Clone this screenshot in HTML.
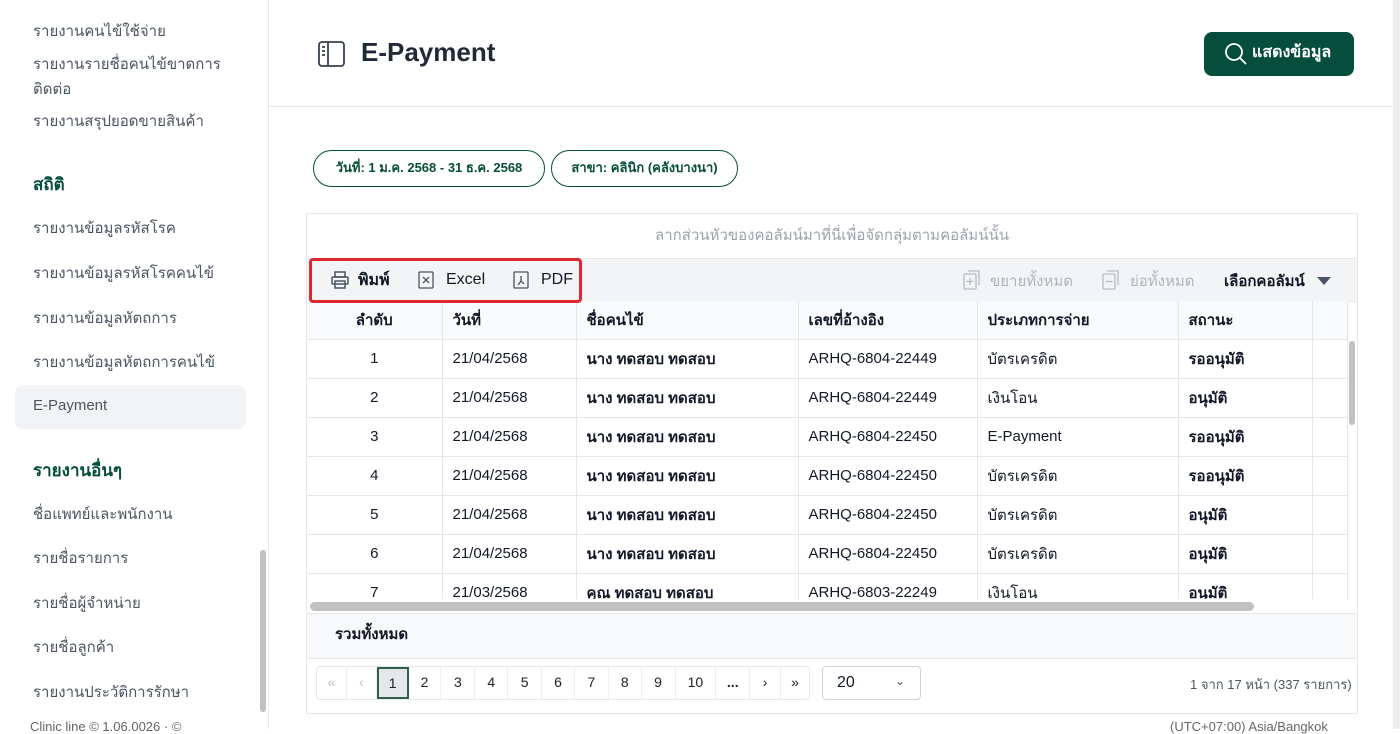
<!DOCTYPE html>
<html><head><meta charset="utf-8"><style>
*{box-sizing:border-box;margin:0;padding:0}
body{width:1400px;height:729px;overflow:hidden;background:#fff;font-family:"Liberation Sans","Noto Sans CJK SC",sans-serif;color:#111827;position:relative}
.abs{position:absolute}
.side{left:0;top:0;width:269px;height:729px;border-right:1px solid #e5e7eb;background:#fff}
.si{position:absolute;left:33px;font-size:15px;color:#4b5563;white-space:nowrap}
.sh{position:absolute;left:33px;font-size:17px;font-weight:bold;color:#064e3b}
.tb{position:absolute;font-size:16px}
table{border-collapse:collapse;font-size:15px}
td,th{height:39px;border-right:1px solid #e5e7eb;border-bottom:1px solid #e5e7eb;padding-left:10px;text-align:left;white-space:nowrap}
th{font-weight:bold;background:#f9fafb;height:38px}
td:first-child,th:first-child{text-align:center;padding-left:0}
.pg{position:absolute;top:666px;height:34px;border:1px solid #e5e7eb;border-radius:4px;display:flex;left:316px;width:494px;background:#fff}
.pg div{height:32px;line-height:30px;text-align:center;font-size:14px;border-right:1px solid #eee;color:#222}
</style></head><body>
<div class="abs side">
<div class="si" style="top:19px">รายงานคนไข้ใช้จ่าย</div>
<div class="si" style="top:52px">รายงานรายชื่อคนไข้ขาดการ</div>
<div class="si" style="top:77px">ติดต่อ</div>
<div class="si" style="top:109px">รายงานสรุปยอดขายสินค้า</div>
<div class="sh" style="top:171px">สถิติ</div>
<div class="si" style="top:216px">รายงานข้อมูลรหัสโรค</div>
<div class="si" style="top:261px">รายงานข้อมูลรหัสโรคคนไข้</div>
<div class="si" style="top:306px">รายงานข้อมูลหัตถการ</div>
<div class="si" style="top:350px">รายงานข้อมูลหัตถการคนไข้</div>
<div class="abs" style="left:15px;top:385px;width:231px;height:44px;background:#f1f3f6;border-radius:8px"></div>
<div class="si" style="top:397px">E-Payment</div>
<div class="sh" style="top:457px">รายงานอื่นๆ</div>
<div class="si" style="top:502px">ชื่อแพทย์และพนักงาน</div>
<div class="si" style="top:546px">รายชื่อรายการ</div>
<div class="si" style="top:591px">รายชื่อผู้จำหน่าย</div>
<div class="si" style="top:635px">รายชื่อลูกค้า</div>
<div class="si" style="top:680px">รายงานประวัติการรักษา</div>
<div class="abs" style="left:260px;top:550px;width:6px;height:162px;background:#c1c1c1;border-radius:3px"></div>
</div>
<div class="abs" style="left:1393px;top:0;width:7px;height:729px;background:#eee"></div>
<div class="abs" style="left:269px;top:106px;width:1124px;height:1px;background:#e5e7eb"></div>
<svg class="abs" style="left:318px;top:41px" width="28" height="26" viewBox="0 0 28 26" fill="none" stroke="#374151" stroke-width="1.8"><rect x="1" y="1" width="25" height="24" rx="3"/><line x1="10" y1="1" x2="10" y2="25"/><line x1="4" y1="6" x2="7" y2="6"/><line x1="4" y1="10" x2="7" y2="10"/><line x1="4" y1="14" x2="7" y2="14"/></svg>
<div class="abs" style="left:361px;top:37px;font-size:26px;font-weight:bold;color:#1f2937">E-Payment</div>
<div class="abs" style="left:1204px;top:32px;width:150px;height:44px;background:#064e3b;border-radius:8px;color:#fff;font-size:16px;font-weight:bold;line-height:42px;padding-left:48px">แสดงข้อมูล
<svg class="abs" style="left:20px;top:10px" width="24" height="24" viewBox="0 0 24 24" fill="none" stroke="#fff" stroke-width="1.8"><circle cx="10" cy="10" r="8"/><line x1="16" y1="16" x2="22" y2="22"/></svg></div>
<div class="abs" style="left:313px;top:150px;width:232px;height:37px;border:1.5px solid #064e3b;border-radius:19px;font-size:13px;font-weight:bold;color:#064e3b;text-align:center;line-height:34px">วันที่: 1 ม.ค. 2568 - 31 ธ.ค. 2568</div>
<div class="abs" style="left:551px;top:150px;width:187px;height:37px;border:1.5px solid #064e3b;border-radius:19px;font-size:13px;font-weight:bold;color:#064e3b;text-align:center;line-height:34px">สาขา: คลินิก (คลังบางนา)</div>
<div class="abs" style="left:306px;top:213px;width:1052px;height:501px;border:1px solid #e5e7eb;overflow:hidden">
<div class="abs" style="left:0;top:0;width:1050px;height:45px;text-align:center;line-height:44px;color:#9ca3af;font-size:15px;border-bottom:1px solid #e5e7eb">ลากส่วนหัวของคอลัมน์มาที่นี่เพื่อจัดกลุ่มตามคอลัมน์นั้น</div>
<div class="abs" style="left:0;top:45px;width:1050px;height:43px;background:#f3f4f6;border-bottom:1px solid #e5e7eb"></div>
<div class="abs" style="left:0;top:87px"><table style="width:1041px">
<tr><th style="width:135px">ลำดับ</th><th style="width:134px">วันที่</th><th style="width:222px">ชื่อคนไข้</th><th style="width:179px">เลขที่อ้างอิง</th><th style="width:201px">ประเภทการจ่าย</th><th style="width:134px">สถานะ</th><th></th></tr>
<tr><td>1</td><td>21/04/2568</td><td><b>นาง ทดสอบ ทดสอบ</b></td><td>ARHQ-6804-22449</td><td>บัตรเครดิต</td><td><b>รออนุมัติ</b></td><td></td></tr>
<tr><td>2</td><td>21/04/2568</td><td><b>นาง ทดสอบ ทดสอบ</b></td><td>ARHQ-6804-22449</td><td>เงินโอน</td><td><b>อนุมัติ</b></td><td></td></tr>
<tr><td>3</td><td>21/04/2568</td><td><b>นาง ทดสอบ ทดสอบ</b></td><td>ARHQ-6804-22450</td><td>E-Payment</td><td><b>รออนุมัติ</b></td><td></td></tr>
<tr><td>4</td><td>21/04/2568</td><td><b>นาง ทดสอบ ทดสอบ</b></td><td>ARHQ-6804-22450</td><td>บัตรเครดิต</td><td><b>รออนุมัติ</b></td><td></td></tr>
<tr><td>5</td><td>21/04/2568</td><td><b>นาง ทดสอบ ทดสอบ</b></td><td>ARHQ-6804-22450</td><td>บัตรเครดิต</td><td><b>อนุมัติ</b></td><td></td></tr>
<tr><td>6</td><td>21/04/2568</td><td><b>นาง ทดสอบ ทดสอบ</b></td><td>ARHQ-6804-22450</td><td>บัตรเครดิต</td><td><b>อนุมัติ</b></td><td></td></tr>
<tr><td>7</td><td>21/03/2568</td><td><b>คุณ ทดสอบ ทดสอบ</b></td><td>ARHQ-6803-22249</td><td>เงินโอน</td><td><b>อนุมัติ</b></td><td></td></tr>
</table></div>
<div class="abs" style="left:1041px;top:126px;width:9px;height:272px;background:#fff"></div>
<div class="abs" style="left:1042px;top:127px;width:6px;height:84px;background:#c1c1c1;border-radius:3px"></div>
<div class="abs" style="left:0;top:385px;width:1050px;height:14px;background:#fff"></div>
<div class="abs" style="left:3px;top:388px;width:944px;height:9px;background:#c1c1c1;border-radius:5px"></div>
<div class="abs" style="left:0;top:399px;width:1050px;height:46px;background:#f8f9fa;border-top:1px solid #e5e7eb;border-bottom:1px solid #e5e7eb;font-weight:bold;font-size:15px;line-height:42px;padding-left:28px">รวมทั้งหมด</div>
</div>
<div class="abs" style="left:309px;top:258px;width:273px;height:45px;border:3px solid #e0262f;border-radius:4px"></div>
<svg class="abs" style="left:331px;top:271px" width="18" height="18" viewBox="0 0 18 18" fill="none" stroke="#4b5563" stroke-width="1.5"><rect x="4" y="1" width="10" height="5"/><rect x="1" y="6" width="16" height="7" rx="1"/><rect x="4" y="10" width="10" height="7"/></svg>
<div class="tb" style="left:358px;top:268px;font-weight:bold">พิมพ์</div>
<svg class="abs" style="left:418px;top:271px" width="16" height="18" viewBox="0 0 16 18" fill="none" stroke="#4b5563" stroke-width="1.3"><rect x="1" y="1" width="14" height="16" rx="1"/><path d="M5 6l6 6M11 6l-6 6"/></svg>
<div class="tb" style="left:446px;top:271px">Excel</div>
<svg class="abs" style="left:513px;top:271px" width="16" height="18" viewBox="0 0 16 18" fill="none" stroke="#4b5563" stroke-width="1.3"><rect x="1" y="1" width="14" height="16" rx="1"/><path d="M8 5v5l-3 4M8 10l3 3"/></svg>
<div class="tb" style="left:541px;top:271px">PDF</div>
<svg class="abs" style="left:963px;top:270px" width="18" height="20" viewBox="0 0 18 20" fill="none" stroke="#b8bcc2" stroke-width="1.3"><rect x="1" y="4" width="12" height="15" rx="1"/><path d="M5 1h11v14M7 8v7M3.5 11.5h7"/></svg>
<div class="tb" style="left:990px;top:269px;color:#b0b4ba;font-size:15px">ขยายทั้งหมด</div>
<svg class="abs" style="left:1102px;top:270px" width="18" height="20" viewBox="0 0 18 20" fill="none" stroke="#b8bcc2" stroke-width="1.3"><rect x="1" y="4" width="12" height="15" rx="1"/><path d="M5 1h11v14M3.5 11.5h7"/></svg>
<div class="tb" style="left:1130px;top:269px;color:#b0b4ba;font-size:15px">ย่อทั้งหมด</div>
<div class="tb" style="left:1224px;top:269px;font-weight:bold;font-size:15px">เลือกคอลัมน์</div>
<div class="abs" style="left:1317px;top:277px;width:0;height:0;border-left:7px solid transparent;border-right:7px solid transparent;border-top:8px solid #4b5563"></div>
<div class="pg">
<div style="width:30px;color:#bbb">«</div><div style="width:30px;color:#bbb">‹</div>
<div style="width:32px;background:#e5e7eb;border:2px solid #2f5d50;line-height:28px">1</div>
<div style="width:33px">2</div><div style="width:34px">3</div><div style="width:33px">4</div><div style="width:34px">5</div><div style="width:33px">6</div><div style="width:34px">7</div><div style="width:33px">8</div><div style="width:34px">9</div><div style="width:41px">10</div><div style="width:34px;font-weight:bold">...</div><div style="width:31px">›</div><div style="width:28px;border:none">»</div>
</div>
<div class="abs" style="left:822px;top:666px;width:99px;height:34px;border:1px solid #d1d5db;border-radius:4px;font-size:16px;line-height:32px;padding-left:14px">20<span style="position:absolute;left:72px;top:-2px;font-size:12px;color:#555">⌄</span></div>
<div class="abs" style="left:1190px;top:674px;font-size:13px;color:#4b5563">1 จาก 17 หน้า (337 รายการ)</div>
<div class="abs" style="left:30px;top:719px;font-size:13px;color:#666">Clinic line © 1.06.0026 · ©</div>
<div class="abs" style="left:1170px;top:719px;font-size:13px;color:#666">(UTC+07:00) Asia/Bangkok</div>
</body></html>
